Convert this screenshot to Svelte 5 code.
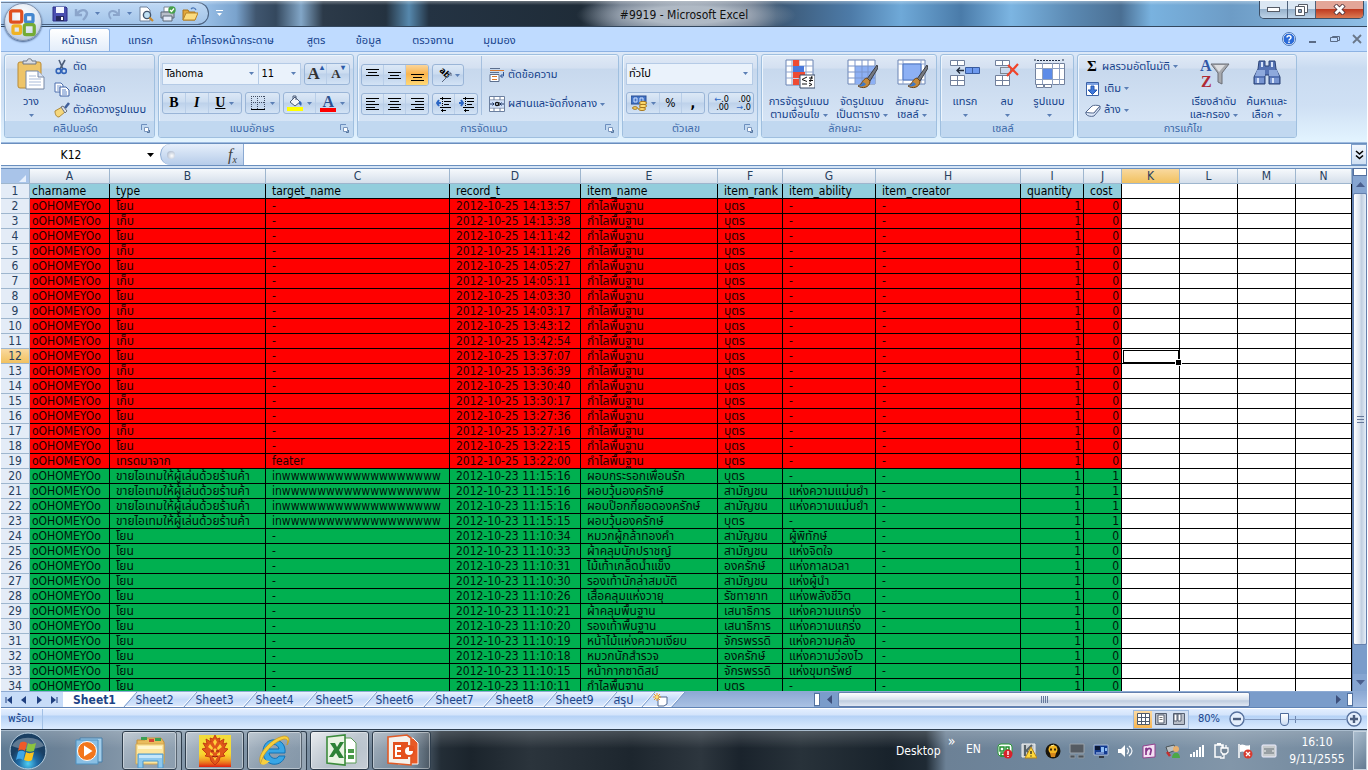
<script>
  const icons = {
    save: [16, 16, '<path d="M1 1h13l1 1v13H1z" fill="#4a4fb0" stroke="#2c2f86"/><path d="M4 1h8v6H4z" fill="#f4f6ff"/><path d="M4 10h8v5H4z" fill="#26295e"/><path d="M9 11h2v3H9z" fill="#fff"/>'],
    undo: [16, 16, '<path d="M2 3v6h6M3 8c3-5 9-5 10-1 0 3-2 5-4 7" fill="none" stroke="#8ba5cb" stroke-width="2.4"/>'],
    redo: [16, 16, '<path d="M13 3v6H7M12 8C9 4 4 4 3 8c0 3 1 4 2 5" fill="none" stroke="#8ba5cb" stroke-width="1.8"/>'],
    preview: [16, 16, '<path d="M2 1h7l3 3v11H2z" fill="#fff" stroke="#6f819b"/><circle cx="9" cy="9" r="3.6" fill="#bfe0f4" stroke="#42556e" stroke-width="1.4"/><path d="M11.500 11.500l3.500 3.500" stroke="#c98a2c" stroke-width="2.200"/>'],
    print: [16, 16, '<path d="M4 1h7v5H4z" fill="#fff" stroke="#7b8796"/><path d="M1 6h13v6H1z" fill="#b8bec9" stroke="#5b6676"/><path d="M3 10h9v5H3z" fill="#e4ebf8" stroke="#5b6676"/><circle cx="12" cy="4" r="3.700" fill="#46a04b"/><path d="M10 4l1.500 1.500L14 2.500" fill="none" stroke="#fff" stroke-width="1.200"/>'],
    open: [16, 16, '<path d="M1 4h5l1 2h6v8H1z" fill="#e2a73c" stroke="#a8741e"/><path d="M1 14l3-7h12l-3 7z" fill="#fbdc80" stroke="#b98528"/><path d="M9 3c2-2 4-1 5 1" fill="none" stroke="#4b76b6" stroke-width="1.300"/>'],
    cut: [16, 16, '<path d="M5 1l4 9M11 1L6 10" stroke="#4e5f7b" stroke-width="1.600"/><ellipse cx="4.500" cy="12" rx="2.300" ry="2.400" fill="none" stroke="#3163b8" stroke-width="1.600"/><ellipse cx="10" cy="12" rx="2.300" ry="2.400" fill="none" stroke="#3163b8" stroke-width="1.600"/>'],
    copy: [16, 16, '<path d="M1 2h6l2 2v7H1z" fill="#fff" stroke="#4d6fae"/><path d="M3 5h4M3 7h3M3 9h3" stroke="#7d9bd0"/><path d="M6 6h6l3 3v6H6z" fill="#fff" stroke="#3c60a4"/><path d="M8 9h4M8 11h5M8 13h5" stroke="#5b82c6"/>'],
    painter: [16, 16, '<path d="M1 9l7-4 3 5-6 5c-3 0-4-3-4-6z" fill="#f5d77c" stroke="#b08a38"/><path d="M7 5l4 6 2-2-4-5z" fill="#dfe3ea" stroke="#6d7480"/><path d="M11 6l4-5" stroke="#41609a" stroke-width="2.600"/>'],
    paste: [32, 32, '<rect x="3" y="4" width="23" height="26" rx="2" fill="#eec468" stroke="#b98a35"/><path d="M8 6V3h4c0-3 5-3 5 0h4v3z" fill="#d9dce2" stroke="#6f7786"/><path d="M11 13h12l6 6v12H11z" fill="#fff" stroke="#7788a5"/><path d="M23 13v6h6" fill="#dce5f4" stroke="#7788a5"/><path d="M14 18h7M14 21h12M14 24h12M14 27h12" stroke="#a9bbd9"/>'],
    borders: [16, 16, '<path d="M1 1.500h14M1 7.500h14M1.500 1v14M7.500 1v14M14.500 1v14" stroke="#3e4b62" stroke-dasharray="1 1"/><path d="M1 14.500h14" stroke="#000"/>'],
    fill: [16, 16, '<path d="M3 7l5-5 5 5-5 4z" fill="#f2f5fb" stroke="#4c5c78"/><path d="M6 4V1h3v4" fill="none" stroke="#4c5c78"/><path d="M12 6c3 0 3 3 2 5l-2-2z" fill="#3566b8"/><path d="M0 12h16v4H0z" fill="#ff0"/>'],
    wrap: [16, 16, '<path d="M1 1.500h10M1 5.500h9" stroke="#5c6f8e"/><path d="M1 3.500h14" stroke="#d9782e"/><path d="M1 7.500h9v7H1z" fill="#fff" stroke="#5c6f8e"/><path d="M3 9.500h5M3 12.500h5" stroke="#d9782e"/><path d="M14.500 5v4h-3m2-2l-2 2 2 2" fill="none" stroke="#2f5597"/>'],
    merge: [16, 16, '<path d="M.5.5h15v15H.5z" fill="#fff" stroke="#6b7f9f"/><path d="M0 4h16M0 12h16M5 0v4m6-4v4M5 12v4m6-4v4" stroke="#6b7f9f"/><path d="M1 4.500h14v7H1z" fill="#cfe0fa"/><path d="M1 8h4m6 0h4M3.500 6.500L5 8 3.500 9.500M12.500 6.500L11 8l1.500 1.500" fill="none" stroke="#203864"/><circle cx="8" cy="8" r="1.600" fill="none" stroke="#111" stroke-width="1.300"/><path d="M10 6v4" stroke="#111"/>'],
    money: [16, 16, '<rect x="0" y="1" width="15" height="8" fill="#4375c7" stroke="#2a4f94"/><path d="M3 3h3v4H3zM9 3h3v4H9z" fill="none" stroke="#cfe0ff"/><ellipse cx="12" cy="8" rx="3.500" ry="1.700" fill="#ffdc6e" stroke="#a4741b"/><ellipse cx="12" cy="11" rx="3.500" ry="1.700" fill="#ffdc6e" stroke="#a4741b"/><ellipse cx="11" cy="14" rx="3.500" ry="1.500" fill="#ffdc6e" stroke="#a4741b"/><ellipse cx="4" cy="13" rx="2.500" ry="1.300" fill="#ffdc6e" stroke="#a4741b"/>'],
    cond: [32, 32, '<path d="M3 2h27v25H3z" fill="#fff" stroke="#6b84b4"/><path d="M3 8h27M3 14h27M3 20h27M9 2v25M16 2v25M23 2v25" stroke="#8fa5cf"/><path d="M10 2h6v6h-6zM10 14h12v6H10zM10 21h6v6h-6z" fill="#ee4a33"/><path d="M10 8h11v6H10z" fill="#4a79dc"/><path d="M17 17h15v13H17z" fill="#fff" stroke="#394a66"/><path d="M24 19l-5 2.500 5 2M19 26h5M26 20h4M26 22.500h4M29 18l-2 6M26 25l3 1.500-3 1.500" fill="none" stroke="#111"/>'],
    tablefmt: [32, 32, '<path d="M2 2h27v24H2z" fill="#fff" stroke="#6b84b4"/><path d="M9 8h20v18H9z" fill="#8db0f4"/><path d="M2 8h27M2 14h27M2 20h27M9 2v24M16 2v24M22 2v24" stroke="#7b95cb"/><path d="M31 7L21 21l3 2L32 10z" fill="#76797f" stroke="#3b3d42"/><path d="M21 20c-5 1-4 6-9 8 4 3 12 2 12-5z" fill="#c58a3c" stroke="#6c4413"/><path d="M20 26c-1 2-4 3-8 2 3-1 4-2 5-4z" fill="#3d79c9"/>'],
    cellfmt: [32, 32, '<path d="M2 2h27v24H2z" fill="#fff" stroke="#6b84b4"/><path d="M2 6h27M2 22h27M7 2v24M25 2v24" stroke="#8fa5cf"/><path d="M7 6h18v16H7z" fill="#8db0f4" stroke="#4d74c0"/><path d="M31 7L21 21l3 2L32 10z" fill="#76797f" stroke="#3b3d42"/><path d="M21 20c-5 1-4 6-9 8 4 3 12 2 12-5z" fill="#c58a3c" stroke="#6c4413"/><path d="M20 26c-1 2-4 3-8 2 3-1 4-2 5-4z" fill="#3d79c9"/>'],
    insert: [32, 32, '<path d="M1.500 2.500h14v5h-14zM1.500 17.500h14v10h-14zM8.500 2.500v5M1.500 22.500h14M8.500 17.500v10" fill="#fff" stroke="#71809c"/><path d="M16.500 9.500h14v6h-14zM23.500 9.500v6" fill="#6d99ee" stroke="#385b9f"/><path d="M15 12.500H8m3-3l-3 3 3 3" fill="none" stroke="#222c3d" stroke-width="1.300"/>'],
    del: [32, 32, '<path d="M4.500 2.500h14v5h-14zM4.500 17.500h14v10h-14zM11.500 2.500v5M4.500 22.500h14M11.500 17.500v10" fill="#fff" stroke="#71809c"/><path d="M9.500 9.500h10v6h-10z" fill="none" stroke="#333" stroke-dasharray="1 1"/><path d="M17 7l10 10M27 6L16 18" stroke="#f0442a" stroke-width="2.200"/>'],
    format: [32, 32, '<path d="M2 1v3M30 1v3M4 2.500h24" stroke="#1f2d45" stroke-dasharray="2 1"/><path d="M2.500 5.500h29v21h-29z" fill="#fff" stroke="#71809c"/><path d="M2 10.500h29M2 21.500h29M9.500 5v22M19.500 5v22M26.500 5v22" stroke="#8d9fbf"/><path d="M10 11h9v10h-9z" fill="#5c8be8"/><path d="M3.500 26.500h7v3h-7zM11.500 26.500h7v3h-7z" fill="#fff" stroke="#71809c"/>'],
    down: [16, 16, '<path d="M1.500 1.500h12v13h-12z" fill="#fff" stroke="#3c62a6"/><path d="M2 2h11v2H2z" fill="#7ea3e3"/><path d="M6 5h3v4h3l-4.500 4.500L3 9h3z" fill="#3f78dc" stroke="#2456ad"/>'],
    eraser: [16, 16, '<path d="M1 10L7 4c1-1 6-1 8 0L9 11c-1 2-8 2-8-1z" fill="#fff" stroke="#54698f"/><path d="M1 10c2 1 6 1 8 1l6-7v3l-6 7c-3 1-7 0-8-2z" fill="#dbe6f7" stroke="#54698f"/>'],
    sort: [32, 32, '<path d="M13 6h18l-7 9v11l-4-2v-9z" fill="#a7a9ae" stroke="#6b6e76"/><path d="M16 7h11l-6 7z" fill="#dcdde0"/>'],
    find: [32, 32, '<path d="M8 3h6v5h4V3h6l1 8 4 8v7H18v-9h-4v9H3v-7l4-8z" fill="#5573b4" stroke="#2b4377"/><path d="M6 12h8v6H4zM18 12h8l2 6H18z" fill="#8ea9dc"/><path d="M4 20h9v5H4zM19 20h9v5h-9z" fill="#7895d1"/><path d="M6 20h2v5H6zM21 20h2v5h-2zM10 4h2v5h-2zM20 4h2v5h-2z" fill="#d5e2f9"/>'],
    help: [14, 14, '<circle cx="7" cy="7" r="6" fill="#2b6bd8" stroke="#fff"/><circle cx="7" cy="7" r="6.500" fill="none" stroke="#4b77b8"/><path d="M5 5.500c0-2.500 4-2.500 4 0 0 1.500-2 1.500-2 3M7 9.500V11" fill="none" stroke="#fff" stroke-width="1.500"/>'],
    launcher: [9, 9, '<path d="M.5 6V.5H6" fill="none" stroke="#6d8fbe"/><path d="M3.500 3.500h4v4h-4z" fill="#fff" stroke="#7a96bd"/><path d="M6 8.500h2.500V6" fill="none" stroke="#55769f"/>'],
    media: [30, 30, '<path d="M6 2h22v24H6z" fill="#a3cde9" stroke="#477fa9"/><path d="M2 4h22v24H2z" fill="#89bfe4" stroke="#4d8fbe"/><circle cx="13" cy="15" r="9.500" fill="#f2761c" stroke="#fff"/><path d="M10 9.500v11l8.500-5.500z" fill="#fff"/>'],
    folder: [34, 34, '<path d="M4 6h8l2-2h14l3 4v20H4z" fill="#e9bb5d" stroke="#c4903b"/><path d="M8 3h6v3H8zM22 4h6v3h-6z" fill="#3c9f53"/><path d="M16 5h5v3h-5z" fill="#d44537"/><path d="M3 10h28v20H3z" fill="#fbe6a0" stroke="#d5a64e"/><path d="M5 12h24v3H5z" fill="#fff5cf"/><path d="M5 34V20h25v14h-5v-7H10v7z" fill="#8cc8ee" stroke="#4c97c9"/><path d="M6 21h23v3H6z" fill="#c4e6fa"/>'],
    garuda: [34, 34, '<defs><radialGradient id="gr" cy=".55"><stop offset="0" stop-color="#ffc31a"/><stop offset=".6" stop-color="#ffd22a"/><stop offset="1" stop-color="#f3dc3a"/></radialGradient><linearGradient id="gl" x2="0" y2="1"><stop offset="0" stop-color="#f9a51b" stop-opacity="0"/><stop offset="1" stop-color="#dd1c12"/></linearGradient></defs><rect x="1" y="1" width="32" height="32" fill="url(#gr)"/><rect x="1" y="19" width="32" height="14" fill="url(#gl)"/><path d="M17 1l2 4 3-1-1 4 5-3-1 5 4-1-3 5 4 1-5 5 2 2-5 1-1 4-4 4-4-4-1-4-5-1 2-2-5-5 4-1-3-5 4 1-1-5 5 3-1-4 3 1z" fill="#e0571a" stroke="#b92c10" stroke-width=".8"/><path d="M17 5l2 3-2 4-2-4zM12 10l3 4-1 2-4-3zM22 10l-3 4 1 2 4-3zM17 14l2 2-2 3-2-3zM12 18l3 2v2l-3-1zM22 18l-3 2v2l3-1zM15 23h4l-2 4z" fill="#ffcf3b"/><path d="M13 17h3M18 17h3M14 22l3 1 3-1" fill="none" stroke="#8f1d0b"/>'],
    ie: [36, 36, '<path d="M28 20H12c1 6 8 7 10 3h6c-2 7-8 9-13 8C3 28 3 9 15 7c8-1 14 4 13 13zM12 16h10c-1-6-9-6-10 0z" fill="#38a6e6" stroke="#1272b4"/><path d="M4 31c-6-8 10-26 23-28 7 0 5 6 3 9 1-4 1-6-3-6C18 8 5 20 4 31z" fill="#f8cf3e" stroke="#c99517" stroke-width=".7"/><path d="M4 31c3 2 7-1 9-3-3 0-5-1-7-3-1 3-2 4-2 6z" fill="#f8cf3e"/>'],
    excel: [34, 34, '<path d="M14 4h14l5 5v20H14z" fill="#fff" stroke="#5a9c55"/><path d="M17 15h6v4h-6zM25 15h6v4h-6zM17 21h6v4h-6zM25 21h6v4h-6z" fill="#4a9a49"/><path d="M4 3l18-2v30L4 29z" fill="#e9f4e3" stroke="#3c8c3c" stroke-width="1.600"/><path d="M7 9h5l2 4 3-5h4l-5 8 5 8h-5l-3-5-3 4H6l5-8z" fill="#2d8237"/>'],
    ppt: [34, 34, '<path d="M13 4h15l5 5v21H13z" fill="#e95a26" stroke="#fff"/><path d="M3 3l19-2 4 3v27L3 29z" fill="#f5f1ec" stroke="#e05a26" stroke-width="1.600"/><path d="M8 8h15v17H8z" fill="#e4511e"/><path d="M10 11h6v2h-4v3h4v2h-4v3h4v2h-6z" fill="#fff"/><circle cx="24" cy="17" r="6" fill="#e4511e"/><circle cx="24" cy="17" r="4" fill="#fff"/><path d="M24 17v-5h5v5z" fill="#e4511e"/>'],
    t1: [16, 16, '<rect x="1" y="1" width="14" height="12" rx="3" fill="#fff" stroke="#2b9b38"/><path d="M3 4h4v4H3zM9 4h3v3H9zM4 10h4v3H4z" fill="none" stroke="#22902f" stroke-width="1.500"/><circle cx="11" cy="11" r="4.500" fill="#d8202a"/><path d="M11 8v4M11 13v1" stroke="#fff" stroke-width="1.400"/>'],
    t2: [16, 16, '<path d="M1 1h13v13H1z" fill="#c5cbcf" stroke="#eee"/><path d="M4 2v11M5 8l6-6M5 7l6 6" stroke="#576268" stroke-width="2"/><path d="M10 4l6 11H4z" fill="#ffd83a" stroke="#b3851c"/><path d="M10 8v3M10 12.500v1" stroke="#222" stroke-width="1.300"/>'],
    t3: [16, 16, '<circle cx="8" cy="8" r="7.500" fill="#19150c"/><circle cx="8" cy="6.500" r="4.500" fill="#f3b622"/><path d="M5 10h6l-1 4H6z" fill="#d6871a"/><path d="M5 5.500h2v2H5zM9 5.500h2v2H9z" fill="#402a04"/><path d="M6 3l3-1" stroke="#fff2a0"/>'],
    t4: [16, 16, '<path d="M1 1h14v9H1z" fill="#555b62" stroke="#9ba3aa"/><path d="M1 12h5v3H1zM9 12h6v3H9z" fill="#4b5259" stroke="#8b949c"/>'],
    t5: [16, 16, '<path d="M1 2h14v10H1z" fill="#123b91" stroke="#a9b9d3"/><path d="M2 3h5v4H2z" fill="#0a1836"/><path d="M8 4h3v5H8zM12 5h2v3h-2z" fill="#8ebcf2"/><path d="M3 10h8" fill="none" stroke="#cce0ff"/><path d="M6 13h5v2H6z" fill="#353a44"/>'],
    t6: [16, 16, '<path d="M1 6h3l4-4v12l-4-4H1z" fill="#fff"/><path d="M10 5c2 2 2 4 0 6M12 3c4 3 4 7 0 10" fill="none" stroke="#f3f6fa" stroke-width="1.200"/>'],
    t7: [16, 16, '<path d="M2 3l12-2v13l-12 1z" fill="#f3dff3" stroke="#93418f"/><path d="M5 12V5l1 2c2-3 5-1 4 1l-1 4" fill="none" stroke="#86358a" stroke-width="1.700"/>'],
    t8: [16, 16, '<path d="M1 4l8-2 2 5-8 3z" fill="#bac0c3" stroke="#4c5356"/><circle cx="11" cy="6" r="3" fill="#e9b06e"/><path d="M7 15c0-7 8-7 8 0z" fill="#4ba846"/><path d="M2 9l3 4" stroke="#c52e2e" stroke-width="2.500"/>'],
    t9: [16, 16, '<path d="M1 11h2v3H1zM4 9h2v5H4zM7 7h2v7H7zM10 4h2v10h-2zM13 2h2v12h-2z" fill="#fff"/>'],
    t10: [16, 16, '<path d="M2 2h8v12H2z" fill="none" stroke="#fff" stroke-width="1.500"/><path d="M4 0h4v2H4z" fill="#fff"/><path d="M8 5h7v4l-2 2h-3l-2-2zM9 2v3M13 2v3M11 11v4H7" fill="#738596" stroke="#fff" stroke-width="1.300"/>'],
    t11: [16, 16, '<path d="M2 1v14" stroke="#fff" stroke-width="1.500"/><path d="M3 2c4-2 5 2 10 0v7c-5 2-6-2-10 0z" fill="#fff"/><circle cx="11" cy="11" r="4.500" fill="#d83a2f"/><path d="M9 9l4 4M13 9l-4 4" stroke="#fff" stroke-width="1.300"/>'],
    t12: [16, 16, '<rect x="1" y="2" width="14" height="12" rx="1" fill="#c7cbcd" stroke="#eef"/><path d="M3 6h10M3 10h10M5 8h6" stroke="#697278"/>'],
    newsheet: [16, 14, '<path d="M5 4h9v7l-3 2H5z" fill="#fff" stroke="#50688f"/><path d="M4 0v8M0 4h8M1 1l6 6M7 1L1 7" stroke="#f0951e"/><circle cx="4" cy="4" r="1.500" fill="#ffe26a"/>'],
  };

  const ribbonTabs = [
    ['หน้าแรก', 61], ['แทรก', 61], ['เค้าโครงหน้ากระดาษ', 119], ['สูตร', 52],
    ['ข้อมูล', 53], ['ตรวจทาน', 76], ['มุมมอง', 57],
  ];
  const letters = 'ABCDEFGHIJKLMN'.split('');
  const widths = [80, 156, 184, 131, 137, 65, 93, 145, 63, 38, 58, 58, 58, 0];
  const fields = ['charname', 'type', 'target_name', 'record_t', 'item_name', 'item_rank', 'item_ability', 'item_creator', 'quantity', 'cost'];

  const redTimes = ['14:13:57', '14:13:38', '14:11:42', '14:11:26', '14:05:27', '14:05:11', '14:03:30', '14:03:17', '13:43:12', '13:42:54', '13:37:07', '13:36:39', '13:30:40', '13:30:17', '13:27:36', '13:27:16', '13:22:15', '13:22:00'];
  const sold = 'ขายไอเทมให้ผู้เล่นด้วยร้านค้า';
  const buyer = 'inwwwwwwwwwwwwwwwwww';
  const green = [
    [sold, buyer, '11:15:16', 'ผอบกระรอกเพื่อนรัก', 'บุตร', '-', 1],
    [sold, buyer, '11:15:16', 'ผอบวุ้นองครักษ์', 'สามัญชน', 'แห่งความแม่นยำ', 1],
    [sold, buyer, '11:15:16', 'ผอบป๊อกกี้ยอดองครักษ์', 'สามัญชน', 'แห่งความแม่นยำ', 1],
    [sold, buyer, '11:15:15', 'ผอบวุ้นองครักษ์', 'บุตร', '-', 1],
    ['โยน', '-', '11:10:34', 'หมวกผู้กล้าทองคำ', 'สามัญชน', 'ผู้พิทักษ์', 0],
    ['โยน', '-', '11:10:33', 'ผ้าคลุมนักปราชญ์', 'สามัญชน', 'แห่งจิตใจ', 0],
    ['โยน', '-', '11:10:31', 'ไม้เท้าเกล็ดน้ำแข็ง', 'องครักษ์', 'แห่งกาลเวลา', 0],
    ['โยน', '-', '11:10:30', 'รองเท้านักล่าสมบัติ', 'สามัญชน', 'แห่งผู้นำ', 0],
    ['โยน', '-', '11:10:26', 'เสื้อคลุมแห่งวายุ', 'รัชทายาท', 'แห่งพลังชีวิต', 0],
    ['โยน', '-', '11:10:21', 'ผ้าคลุมพื้นฐาน', 'เสนาธิการ', 'แห่งความแกร่ง', 0],
    ['โยน', '-', '11:10:20', 'รองเท้าพื้นฐาน', 'เสนาธิการ', 'แห่งความแกร่ง', 0],
    ['โยน', '-', '11:10:19', 'หน้าไม้แห่งความเงียบ', 'จักรพรรดิ', 'แห่งความคลั่ง', 0],
    ['โยน', '-', '11:10:18', 'หมวกนักสำรวจ', 'องครักษ์', 'แห่งความว่องไว', 0],
    ['โยน', '-', '11:10:15', 'หน้ากากซาดิสม์', 'จักรพรรดิ', 'แห่งขุมทรัพย์', 0],
    ['โยน', '-', '11:10:11', 'กำไลพื้นฐาน', 'บุตร', '-', 0],
  ];
  const rows = [
    { kind: 'head', cells: fields },
    ...redTimes.map((t, i) => ({
      kind: 'red',
      cells: ['oOHOMEYOo', i === 17 ? 'เทรดมาจาก' : i % 2 ? 'เก็บ' : 'โยน', i === 17 ? 'feater' : '-', '2012-10-25 ' + t, 'กำไลพื้นฐาน', 'บุตร', '-', '-', 1, 0],
    })),
    ...green.map((g) => ({
      kind: 'green',
      cells: ['oOHOMEYOo', g[0], g[1], '2012-10-23 ' + g[2], g[3], g[4], g[5], '-', 1, g[6]],
    })),
  ];
  const sheets = ['Sheet1', 'Sheet2', 'Sheet3', 'Sheet4', 'Sheet5', 'Sheet6', 'Sheet7', 'Sheet8', 'Sheet9', 'สรุป'];
  const tray = ['t1', 't2', 't3', 't4', 't5', 't6', 't7', 't8', 't9', 't10', 't11', 't12'];
</script>

{#snippet icon(name)}
  <svg class="icon" width={icons[name][0]} height={icons[name][1]} viewBox="0 0 {icons[name][0]} {icons[name][1]}" aria-hidden="true">{@html icons[name][2]}</svg>
{/snippet}

{#snippet arrow()}
  <svg class="arrow" width="5" height="3" viewBox="0 0 5 3" aria-hidden="true"><path d="M0 0h5L2.500 3z" fill="currentColor" /></svg>
{/snippet}

{#snippet lines(kind)}
  <svg class="lines" width="15" height="16" viewBox="0 0 15 16" aria-hidden="true">
    {#if kind === 'top'}<path d="M1 2.500h13M3 5.500h9M1 8.500h13" />
    {:else if kind === 'mid'}<path d="M1 5.500h13M3 8.500h9M1 11.500h13" />
    {:else if kind === 'bottom'}<path d="M1 7.500h13M3 10.500h9M1 13.500h13" />
    {:else if kind === 'left'}<path d="M1 2.500h13M1 5.500h9M1 8.500h13M1 11.500h9M1 13.500h13" />
    {:else if kind === 'center'}<path d="M1 2.500h13M3 5.500h9M1 8.500h13M3 11.500h9M1 13.500h13" />
    {:else if kind === 'right'}<path d="M1 2.500h13M5 5.500h9M1 8.500h13M5 11.500h9M1 13.500h13" />
    {:else}<path d="M4 2.500h11M8 5.500h7M8 8.500h5M4 11.500h11M5 14.500h5" /><path class="dots" d="M6.500 1v15" />
      <path class="blue" d={kind === 'outdent' ? 'M5 7H1m2-3L1 7l2 3' : 'M0 7h4M2 4l2 3-2 3'} />{/if}
  </svg>
{/snippet}

{#snippet caption(text, launch = true)}
  <div class="caption"><span>{text}</span>{#if launch}<button aria-label="เปิดกล่องโต้ตอบ {text}">{@render icon('launcher')}</button>{/if}</div>
{/snippet}

{#snippet big(name, a, b, w)}
  <button class="big" style:width="{w}px">
    {@render icon(name)}
    <span>{a}</span>
    {#if b}<span>{b} {@render arrow()}</span>{:else}<span>{@render arrow()}</span>{/if}
  </button>
{/snippet}

<div class="screen">
  <header class="title">
    <div class="quick">
      <button aria-label="บันทึก">{@render icon('save')}</button>
      <button aria-label="เลิกทำ" class="split">{@render icon('undo')}{@render arrow()}</button>
      <button aria-label="ทำซ้ำ" class="split">{@render icon('redo')}{@render arrow()}</button>
      <button aria-label="ตัวอย่างก่อนพิมพ์">{@render icon('preview')}</button>
      <button aria-label="พิมพ์">{@render icon('print')}</button>
      <button aria-label="เปิด">{@render icon('open')}</button>
    </div>
    <button class="customize" aria-label="กำหนดแถบเครื่องมือด่วน"><svg width="7" height="7" viewBox="0 0 7 7"><path d="M0 .5h7" stroke="#fff" /><path d="M1 3h5L3.500 6z" fill="#fff" /></svg></button>
    <h1>#9919 - Microsoft Excel</h1>
    <div class="winbtns">
      <button aria-label="ย่อ"><svg width="13" height="6" viewBox="0 0 13 6"><rect x=".5" y=".5" width="12" height="4" fill="#fff" stroke="#555b66" /></svg></button>
      <button aria-label="คืนค่า"><svg width="13" height="12" viewBox="0 0 13 12"><path d="M3.500.5h9v8h-9z" fill="#fff" stroke="#555b66" /><path d="M.5 2.500h9v9h-9z" fill="#fff" stroke="#555b66" /><path d="M3.500 5.500h3v3h-3z" fill="#8ba6c4" stroke="#555b66" /></svg></button>
      <button class="close" aria-label="ปิด"><svg width="13" height="11" viewBox="0 0 13 11"><path d="M2 1l9 9M11 1l-9 9" stroke="#50333a" stroke-width="4.500" /><path d="M2.500 1.500l8 8M10.500 1.500l-8 8" stroke="#fff" stroke-width="2.800" /></svg></button>
    </div>
  </header>
  <button class="office" aria-label="ปุ่ม Office">
    <svg width="30" height="30" viewBox="1 1 24 24"><g fill="none" stroke-width="2.600"><rect x="3" y="4" width="9" height="9" rx="1.500" stroke="#e0501f" /><rect x="15" y="7" width="6" height="6" rx="1" stroke="#4487cf" /><rect x="5" y="16" width="6" height="6" rx="1" stroke="#f0b323" /><rect x="14" y="15" width="8" height="8" rx="1.500" stroke="#74ab35" /></g></svg>
  </button>

  <nav class="tabs">
    {#each ribbonTabs as [name, w], i}
      <button class:active={i === 0} style:width="{w}px">{name}</button>
    {/each}
    <div class="docbtns">
      <button aria-label="วิธีใช้">{@render icon('help')}</button>
      <button aria-label="ย่อเอกสาร"><svg width="10" height="10" viewBox="0 0 10 10"><path d="M1 8h7" stroke="#5a6b85" stroke-width="2" /></svg></button>
      <button aria-label="คืนค่าเอกสาร"><svg width="10" height="10" viewBox="0 0 10 10"><path d="M2.500 2.500h7v4h-7z" fill="none" stroke="#5a6b85" /><path d="M.5 3.500h7v4h-7z" fill="#c0dbff" stroke="#5a6b85" /></svg></button>
      <button aria-label="ปิดเอกสาร"><svg width="10" height="10" viewBox="0 0 10 10"><path d="M1 1l8 8M9 1L1 9" stroke="#6a7789" stroke-width="1.800" /></svg></button>
    </div>
  </nav>

  <div class="ribbon">
    <section class="group" style:width="151px">
      <div class="body">
        {@render big('paste', 'วาง', '', 46)}
        <div class="stack">
          <button class="small">{@render icon('cut')}ตัด</button>
          <button class="small">{@render icon('copy')}คัดลอก</button>
          <button class="small">{@render icon('painter')}ตัวคัดวางรูปแบบ</button>
        </div>
      </div>
      {@render caption('คลิปบอร์ด')}
    </section>

    <section class="group" style:width="196px">
      <div class="body rows">
        <div class="row">
          <label class="combo wide"><select aria-label="แบบอักษร"><option>Tahoma</option></select>{@render arrow()}</label>
          <label class="combo num"><select aria-label="ขนาดแบบอักษร"><option>11</option></select>{@render arrow()}</label>
          <div class="set shift"><button class="serif grow" aria-label="เพิ่มขนาดแบบอักษร">A<sup>▴</sup></button><button class="serif shrink" aria-label="ลดขนาดแบบอักษร">A<sup>▾</sup></button></div>
        </div>
        <div class="row">
          <div class="set"><button class="serif wider"><b>B</b></button><button class="serif wider"><i>I</i></button><button class="serif split-lg"><u>U</u>{@render arrow()}</button></div>
          <div class="set shift"><button class="split-lg" aria-label="เส้นขอบ">{@render icon('borders')}{@render arrow()}</button></div>
          <div class="set shift"><button class="split-lg" aria-label="สีเติม">{@render icon('fill')}{@render arrow()}</button><button class="split-lg serif" aria-label="สีแบบอักษร"><span class="fontcolor">A</span>{@render arrow()}</button></div>
        </div>
      </div>
      {@render caption('แบบอักษร')}
    </section>

    <section class="group" style:width="262px">
      <div class="body">
        <div class="rows align">
          <div class="row">
            <div class="set"><button aria-label="ชิดบน">{@render lines('top')}</button><button aria-label="กึ่งกลางแนวตั้ง">{@render lines('mid')}</button><button aria-label="ชิดล่าง" class="on">{@render lines('bottom')}</button></div>
            <div class="set shift"><button class="turn" aria-label="การวางแนว"><svg width="17" height="17" viewBox="0 0 17 17"><text x="1" y="6" transform="rotate(45 4 6)" font-size="9" font-weight="bold">ab</text><path d="M5 15L14 6m-3 0h3v3" fill="none" stroke="#58657c" /></svg>{@render arrow()}</button></div>
          </div>
          <div class="row">
            <div class="set"><button aria-label="ชิดซ้าย">{@render lines('left')}</button><button aria-label="กึ่งกลาง">{@render lines('center')}</button><button aria-label="ชิดขวา">{@render lines('right')}</button></div>
            <div class="set shift"><button aria-label="ลดการเยื้อง">{@render lines('outdent')}</button><button aria-label="เพิ่มการเยื้อง">{@render lines('indent')}</button></div>
          </div>
        </div>
        <div class="rows wraps">
          <button class="small">{@render icon('wrap')}ตัดข้อความ</button>
          <button class="small">{@render icon('merge')}ผสานและจัดกึ่งกลาง {@render arrow()}</button>
        </div>
      </div>
      {@render caption('การจัดแนว')}
    </section>

    <section class="group" style:width="136px">
      <div class="body rows">
        <div class="row"><label class="combo full"><select aria-label="รูปแบบตัวเลข"><option>ทั่วไป</option></select>{@render arrow()}</label></div>
        <div class="row">
          <div class="set"><button class="split-lg" aria-label="รูปแบบสกุลเงิน">{@render icon('money')}{@render arrow()}</button><button class="pct">%</button><button class="comma">,</button></div>
          <div class="set shift"><button class="dec" aria-label="เพิ่มตำแหน่งทศนิยม"><span><i>←</i>.0</span><span>.00</span></button><button class="dec" aria-label="ลดตำแหน่งทศนิยม"><span>.00</span><span><i>→</i>.0</span></button></div>
        </div>
      </div>
      {@render caption('ตัวเลข')}
    </section>

    <section class="group" style:width="176px">
      <div class="body">
        {@render big('cond', 'การจัดรูปแบบ', 'ตามเงื่อนไข', 68)}
        {@render big('tablefmt', 'จัดรูปแบบ', 'เป็นตาราง', 58)}
        {@render big('cellfmt', 'ลักษณะ', 'เซลล์', 42)}
      </div>
      {@render caption('ลักษณะ', false)}
    </section>

    <section class="group" style:width="134px">
      <div class="body">
        {@render big('insert', 'แทรก', '', 42)}
        {@render big('del', 'ลบ', '', 42)}
        {@render big('format', 'รูปแบบ', '', 42)}
      </div>
      {@render caption('เซลล์', false)}
    </section>

    <section class="group" style:width="220px">
      <div class="body">
        <div class="stack editing">
          <button class="small"><b class="sigma">Σ</b>ผลรวมอัตโนมัติ {@render arrow()}</button>
          <button class="small">{@render icon('down')}เติม {@render arrow()}</button>
          <button class="small">{@render icon('eraser')}ล้าง {@render arrow()}</button>
        </div>
        <button class="big" style:width="54px">
          <svg class="icon" width="32" height="32" viewBox="0 0 32 32">{@html icons.sort[2]}<g font-family="Liberation Serif, serif" font-weight="bold" font-size="16"><text x="2" y="13" fill="#3158a6">A</text><text x="3" y="29" fill="#b02a35">Z</text></g></svg>
          <span>เรียงลำดับ</span><span>และกรอง {@render arrow()}</span>
        </button>
        {@render big('find', 'ค้นหาและ', 'เลือก', 54)}
      </div>
      {@render caption('การแก้ไข', false)}
    </section>
  </div>

  <div class="formula">
    <label class="namebox"><input value="K12" aria-label="กล่องชื่อ" /><svg width="7" height="4" viewBox="0 0 7 4"><path d="M0 0h7L3.500 4z" /></svg></label>
    <div class="fxpart"><span class="knob"></span><button class="fx" aria-label="แทรกฟังก์ชัน">f<sub>x</sub></button></div>
    <input class="fxinput" aria-label="แถบสูตร" />
    <button class="expand" aria-label="ขยายแถบสูตร"><svg width="9" height="10" viewBox="0 0 9 10"><path d="M1 1l3.500 3L8 1M1 5.500l3.500 3 3.500-3" fill="none" stroke="#000" stroke-width="1.600" /></svg></button>
  </div>

  <main class="work">
    <div class="grid">
      <table>
        <colgroup><col style:width="29px" />{#each widths as w}<col style:width={w ? `${w}px` : 'auto'} />{/each}</colgroup>
        <thead><tr><th class="corner" aria-label="เลือกทั้งหมด"><svg width="7" height="7" viewBox="0 0 7 7"><path d="M7 0v7H0z" fill="#e6effc" /></svg></th>{#each letters as l}<th class:sel={l === 'K'}>{l}</th>{/each}</tr></thead>
        <tbody>
          {#each rows as row, r}
            <tr class={row.kind}>
              <th class:sel={r === 11}>{r + 1}</th>
              {#each letters as l, c}
                <td class:data={c < 10} class:first={c === 0} class:right={c > 7 && c < 10 && r > 0} class:cursor={r === 11 && l === 'K'}>{row.cells[c] ?? ''}</td>
              {/each}
            </tr>
          {/each}
        </tbody>
      </table>
    </div>
    <div class="vscroll">
      <span class="splitter"></span>
      <button aria-label="เลื่อนขึ้น"><svg width="9" height="5" viewBox="0 0 9 5"><path d="M0 5h9L4.500 0z" fill="#4a5f8e" /></svg></button>
      <div class="vtrack"><div class="vthumb"></div></div>
      <button aria-label="เลื่อนลง"><svg width="9" height="5" viewBox="0 0 9 5"><path d="M0 0h9L4.500 5z" fill="#4a5f8e" /></svg></button>
    </div>
  </main>

  <div class="sheetbar">
    <div class="nav">
      <button aria-label="แผ่นแรก"><svg width="8" height="8" viewBox="0 0 8 8"><path d="M1 1v6" stroke="#1f3f7f" /><path d="M7 0v8L2 4z" /></svg></button>
      <button aria-label="แผ่นก่อน"><svg width="8" height="8" viewBox="0 0 8 8"><path d="M6 0v8L1 4z" /></svg></button>
      <button aria-label="แผ่นถัดไป"><svg width="8" height="8" viewBox="0 0 8 8"><path d="M2 0v8l5-4z" /></svg></button>
      <button aria-label="แผ่นสุดท้าย"><svg width="8" height="8" viewBox="0 0 8 8"><path d="M7 1v6" stroke="#1f3f7f" /><path d="M1 0v8l5-4z" /></svg></button>
    </div>
    {#each [...sheets, ''] as s, i}
      {@const w = s === '' ? 30 : i === 9 ? 38 : 60}
      <button class="sheet" class:current={i === 0} style:width="{w}px" style:z-index={20 - i} aria-label={s || 'แทรกแผ่นงาน'}>
        <svg class="shape" width={w + 14} height="15" viewBox="0 0 {w + 14} 15"><defs><linearGradient id="tab" x2="0" y2="1"><stop offset="0" stop-color="#e9f2ff" /><stop offset=".5" stop-color="#c3daf9" /><stop offset="1" stop-color="#dce9fc" /></linearGradient></defs><path d="M0 15L{i ? 13 : 0} 0H{w + 13}L{w} 15z" fill={i ? 'url(#tab)' : '#fff'} /><path d="M{w + 13} 0L{w} 14.500H0" fill="none" stroke="#fff" /><path d="M{w + 14} 0L{w + 1} 15" stroke="#7c9ccb" /></svg>
        {#if s}<span>{s}</span>{:else}<span class="add">{@render icon('newsheet')}</span>{/if}
      </button>
    {/each}
    <div class="hscroll">
      <span class="vsplit"></span>
      <button aria-label="เลื่อนซ้าย"><svg width="5" height="9" viewBox="0 0 5 9"><path d="M5 0v9L0 4.500z" fill="#3d4f7a" /></svg></button>
      <div class="htrack"><div class="hthumb"></div></div>
      <button aria-label="เลื่อนขวา"><svg width="5" height="9" viewBox="0 0 5 9"><path d="M0 0v9l5-4.500z" fill="#3d4f7a" /></svg></button>
      <span class="vsplit"></span>
    </div>
  </div>

  <footer class="status">
    <span class="ready">พร้อม</span>
    <div class="views">
      <button class="on" aria-label="ปกติ"><svg width="13" height="12" viewBox="0 0 13 12"><path d="M.5.5h12v11H.5zM.5 4.500h12M.5 8.500h12M4.500.5v11M8.500.5v11" fill="#fff" stroke="#4e5a6c" /></svg></button>
      <button aria-label="เค้าโครงหน้ากระดาษ"><svg width="12" height="12" viewBox="0 0 12 12"><path d="M.5.5h11v11H.5z" fill="#b8bec8" stroke="#555f70" /><path d="M3 2h6v8H3z" fill="#fff" stroke="#555f70" /><path d="M4.500 4.500h3M4.500 6.500h3" stroke="#777" /></svg></button>
      <button aria-label="แสดงตัวอย่างตัวแบ่งหน้า"><svg width="12" height="12" viewBox="0 0 12 12"><path d="M.5.5h11v11H.5z" fill="#b8bec8" stroke="#555f70" /><path d="M1 1h3v7H1zM5 1h3v7H5z" fill="#fff" stroke="#555f70" /></svg></button>
    </div>
    <button class="zoom">80%</button>
    <button class="round" aria-label="ย่อเล็กลง"><svg width="16" height="16" viewBox="0 0 16 16"><circle cx="8" cy="8" r="7" fill="#e4eefc" stroke="#56709d" stroke-width="1.400" /><path d="M4 8h8" stroke="#4b5d7d" stroke-width="2.400" /></svg></button>
    <input class="slider" type="range" min="0" max="100" value="38" aria-label="ย่อ/ขยาย" />
    <button class="round" aria-label="ขยายใหญ่ขึ้น"><svg width="16" height="16" viewBox="0 0 16 16"><circle cx="8" cy="8" r="7" fill="#e4eefc" stroke="#56709d" stroke-width="1.400" /><path d="M4 8h8M8 4v8" stroke="#4b5d7d" stroke-width="2.400" /></svg></button>
  </footer>

  <div class="taskbar">
    <button class="start" aria-label="เริ่ม"><svg width="40" height="38" viewBox="0 0 40 38"><defs><radialGradient id="orb" cx=".5" cy=".85"><stop offset="0" stop-color="#4fd0f4" /><stop offset=".5" stop-color="#1f6ca8" /><stop offset="1" stop-color="#193f63" /></radialGradient></defs><circle cx="20" cy="19" r="18" fill="url(#orb)" stroke="#b8cfe0" /><path d="M4 14C8 3 32 3 36 14c-8 4-24 4-32 0z" fill="#fff" opacity=".3" /><path d="M12 11c3-2 5-1 7 0l-2 8c-2-1-4-2-7 0z" fill="#ef5a28" /><path d="M20 11c3 2 5 1 8 0l-2 8c-3 1-5 1-8 0z" fill="#8bc43f" /><path d="M10 20c3-2 5-1 7 0l-2 8c-3-2-5-1-7 0z" fill="#3fa6e8" /><path d="M18 20c3 2 5 1 8 0l-2 8c-3 2-5 1-8 0z" fill="#fbc31f" /></svg></button>
    <button class="pinned" aria-label="Windows Media Player">{@render icon('media')}</button>
    <button class="task many" aria-label="Windows Explorer">{@render icon('folder')}</button>
    <button class="task" aria-label="เกม">{@render icon('garuda')}</button>
    <button class="task many" aria-label="Internet Explorer">{@render icon('ie')}</button>
    <button class="task live" aria-label="Microsoft Excel">{@render icon('excel')}</button>
    <button class="task" aria-label="Microsoft PowerPoint">{@render icon('ppt')}</button>
    <div class="tray">
      <span class="desk">Desktop</span><button class="more" aria-label="แสดงเพิ่มเติม">»</button><span class="lang">EN</span>
      {#each tray as t}<button class="ti" aria-label="ไอคอนถาด {t.slice(1)}">{@render icon(t)}</button>{/each}
      <div class="clock"><span>16:10</span><span>9/11/2555</span></div>
      <button class="peek" aria-label="แสดงเดสก์ท็อป"></button>
    </div>
  </div>
</div>

<style>
  :global(body) { margin: 0; background: #fff; }
  .screen { position: relative; box-sizing: border-box; height: 100vh; min-height: 400px; padding: 1px 1px 0; display: flex; flex-direction: column; overflow: hidden; font: 11px/14px "DejaVu Sans Condensed", "Noto Sans Thai", "Noto Sans", sans-serif; color: #15428b; }
  .screen * { box-sizing: border-box; }
  button, select, input { font: inherit; color: inherit; margin: 0; }
  button { border: 0; padding: 0; background: none; display: flex; align-items: center; justify-content: center; white-space: nowrap; }
  .icon, svg { flex: none; display: block; }
  .arrow { color: #5b7fb5; display: inline-block; vertical-align: middle; }

  .title { flex: none; height: 26px; display: flex; align-items: center; position: relative; border-bottom: 1px solid #33475e; background: radial-gradient(ellipse 110px 22px at 685px 14px, #c5cdd6cc 40%, #8d9aa800 100%), linear-gradient(90deg, #a9cdf2 0, #9cc2ea 200px, #7aa3cd 235px, #40566f 255px, #34485e 275px, #82a6c7 300px, #2c3a49 322px, #243240 385px, #5688ad 408px, #243343 428px, #1f2c38 580px, #58677a 620px, #5c6b80 750px, #3b5774 775px, #4d7ba8 850px, #6fa9d8 900px, #4a7ba9 960px, #7cb5e2 1010px, #5b89b2 1070px, #4a6f93 1120px, #79b2df 1150px, #6d9cc6 1230px, #8fbfe6 100%); }
  .title::after { content: ''; position: absolute; inset: 0 0 auto; height: 4px; background: linear-gradient(#ffffff55, #fff0); }
  .quick { width: 208px; height: 23px; margin-left: 0; padding-left: 51px; display: flex; align-items: center; gap: 6px; border: 1px solid #49607f; border-left: 0; border-radius: 0 12px 12px 0; background: linear-gradient(#c6ddf6cc, #a4c4e8cc); }
  .quick .split { gap: 5px; }
  .quick .icon { width: 16px; height: 16px; }
  .customize { width: 20px; height: 20px; }
  h1 { position: absolute; inset: 6px 0 auto; margin: 0; text-align: center; font-size: 12px; line-height: 16px; font-weight: normal; color: #111; }
  .winbtns { align-self: flex-start; display: flex; margin-left: auto; margin-right: 3px; border: 1px solid #3d4f66; border-top: 0; border-radius: 0 0 5px 5px; overflow: hidden; z-index: 1; }
  .winbtns button { height: 17px; width: 28px; background: linear-gradient(#dbe7f3 45%, #97b2cc 50%, #bdd3e8); border-right: 1px solid #4d617a; }
  .winbtns .close { width: 47px; border: 0; background: linear-gradient(#e3a698 45%, #bf3c22 50%, #dc7a52); }
  .office { position: absolute; left: 4px; top: 3px; width: 38px; height: 38px; border-radius: 50%; z-index: 3; border: 1px solid #7f92ae; background: radial-gradient(circle at 50% 30%, #fff, #dce5f1 55%, #9eb3d1); box-shadow: 0 1px 2px #3f5a85; }

  .tabs { flex: none; height: 24px; display: flex; align-items: flex-end; padding-left: 48px; background: #bfdbff; }
  .tabs > button { height: 22px; padding-top: 2px; }
  .tabs > .active { background: linear-gradient(#fff, #e3edfa); border: 1px solid #8db2e3; border-bottom: 0; border-radius: 3px 3px 0 0; height: 23px; }
  .docbtns { margin-left: auto; align-self: center; display: flex; align-items: center; gap: 12px; padding-right: 5px; }

  .ribbon { flex: none; height: 92px; display: flex; gap: 3px; align-items: stretch; padding: 2px 3px 4px; background: linear-gradient(#dde9f8, #c9dbf1 18%, #cfe0f4 60%, #e3f4ff); border-top: 1px solid #8db2e3; border-bottom: 1px solid #9fbbe0; }
  .group { flex: none; display: flex; flex-direction: column; border: 1px solid #9fbfdf; border-radius: 3px; box-shadow: inset 1px 1px #edf5fd; background: linear-gradient(#dfe9f6, #d4e0f1 16%, #c7d8ed 17%, #dae8f8); overflow: hidden; }
  .body { flex: 1; min-height: 0; display: flex; padding: 1px 3px 0; }
  .rows { display: flex; flex-direction: column; padding-top: 8px; gap: 7px; }
  .row { display: flex; height: 22px; }
  .caption { flex: none; position: relative; height: 16px; line-height: 15px; text-align: center; background: #c1d8f0; color: #3e6aaa; padding-right: 8px; }
  .caption button { position: absolute; right: 4px; top: 3px; }
  .big { flex-direction: column; justify-content: flex-start; line-height: 13px; padding-top: 2px; }
  .big > span { min-height: 13px; }
  .big .icon { margin-bottom: 5px; }
  .stack { display: flex; flex-direction: column; padding-left: 0; }
  .small { height: 22px; gap: 3px; justify-content: flex-start; }
  .sigma { width: 14px; color: #000; font: bold 15px "Liberation Serif", serif; text-align: center; }
  .combo { position: relative; display: block; height: 22px; }
  .combo select { appearance: none; width: 100%; height: 22px; padding: 0 2px; border: 1px solid #b5cbe6; border-radius: 0; background: #eaf2fb; color: #000; }
  .combo .arrow { position: absolute; right: 5px; top: 9px; pointer-events: none; }
  .wide { width: 98px; }
  .num { width: 42px; }
  .num select { border-left: 0; }
  .full { width: 127px; }
  .set { display: flex; border: 1px solid #9ab5d7; border-radius: 3px; background: linear-gradient(#dce8f6, #cbdcf0 45%, #bdd1ea 50%, #d3e3f5); height: 22px; overflow: hidden; }
  .set button { width: 22px; height: 20px; border-right: 1px solid #b9cee8; color: #000; }
  .set button:last-child { border-right: 0; }
  .set .split-lg { width: 33px; gap: 4px; }
  .set .wider { width: 23px; }
  .shift { margin-left: 3px; }
  .set .on { background: linear-gradient(#fbd59a, #f9b44c 45%, #ffd977); }
  .lines path { fill: none; stroke: #000; }
  .lines .blue { stroke: #2c66c4; stroke-width: 2; }
  .lines .dots { stroke-dasharray: 1 1; }
  .serif { font: bold 14px "Liberation Serif", serif; }
  .set .grow { font-size: 17px; color: #333; }
  .set .shrink { font-size: 13px; color: #333; }
  sup { font-size: 8px; line-height: 8px; color: #2c5aa8; align-self: flex-start; }
  .fontcolor { width: 16px; border-bottom: 4px solid red; font-size: 16px; line-height: 13px; color: #2d5190; }
  .align { width: 121px; margin: 0 0 6px; border-right: 1px solid #a6c0df; }
  .wraps { padding-left: 7px; }
  .set .pct { font-size: 12px; }
  .set .turn { width: 30px; gap: 1px; }
  .set .comma { font-size: 14px; font-weight: bold; }
  .set .dec { flex-direction: column; font-size: 9px; line-height: 8px; align-items: flex-end; padding-right: 2px; border: 0; }
  .dec i { font-style: normal; color: #2c66c4; }
  .editing { width: 109px; padding-left: 4px; }

  .formula { flex: none; height: 23px; display: flex; border: 1px solid #6a8fbe; border-width: 1px 0; background: #fff; color: #000; font-size: 12px; }
  .namebox { width: 155px; display: flex; align-items: center; padding-right: 2px; }
  .namebox input { flex: 1; min-width: 0; border: 0; padding: 0 6px 0 0; background: none; text-align: center; outline: 0; }
  .fxpart { width: 84px; margin-left: 4px; display: flex; align-items: center; justify-content: space-between; padding: 0 6px; border: 1px solid #8aa9d2; border-width: 0 1px; border-radius: 11px 0 0 11px; background: linear-gradient(#e6effb, #b6cce9); }
  .knob { width: 8px; height: 8px; border-radius: 50%; background: radial-gradient(circle at 60% 60%, #fff, #99a9c2); }
  .fx { font: italic 16px "Liberation Serif", serif; color: #444; }
  .fx sub { font-size: 10px; line-height: 8px; align-self: flex-end; }
  .fxinput { flex: 1; min-width: 0; border: 0; outline: 0; background: #fff; }
  .expand { width: 16px; border: 1px solid #7f9fca; background: linear-gradient(#f1f6fd, #cfdff3); }

  .work { flex: 1; min-height: 0; display: flex; border-top: 2px solid #d5e4f5; }
  .grid { flex: 1; min-width: 0; overflow: hidden; border-top: 1px solid #6a8fbe; background: #fff; }
  table { width: 100%; table-layout: fixed; border-collapse: separate; border-spacing: 0; font-size: 12px; line-height: 14px; color: #000; }
  th, td { padding: 0; height: 15px; border: 0 solid #000; border-width: 0 1px 1px 0; font-weight: normal; white-space: nowrap; overflow: hidden; line-height: 14px; }
  thead th { background: linear-gradient(#f6f9fc, #d5dfeb); border-color: #9eb6ce; color: #27405e; }
  tbody th { background: #e4ecf7; border-color: #9eb6ce; color: #27405e; }
  th.corner { background: #a9c4e9; }
  .corner svg { margin: 4px 3px 0 auto; }
  th.sel { background: linear-gradient(#f9d99f, #f1c15f); }
  td.data { padding: 0 0 0 6px; }
  td.first { padding-left: 2px; }
  td.right { text-align: right; padding: 0 2px; }
  .head .data { background: #92cddc; }
  .red .data { background: #f00; color: #1c0000; }
  .green .data { background: #00b050; color: #01140a; }
  td.cursor { position: relative; overflow: visible; outline: 1px solid #000; outline-offset: -2px; }
  td.cursor::after { content: ''; position: absolute; right: -3px; bottom: -3px; width: 5px; height: 5px; border: 1px solid #fff; background: #000; }

  .vscroll { width: 15px; flex: none; display: flex; flex-direction: column; align-items: center; background: #7a9cca; border-left: 1px solid #6484b5; }
  .splitter { width: 14px; height: 8px; border: 1px solid #53709f; background: #fff; }
  .vscroll button { height: 17px; width: 14px; background: #86a5d1; }
  .vtrack { flex: 1; width: 14px; display: flex; flex-direction: column; }
  .vthumb { height: 94%; border: 1px solid #6480ad; border-radius: 2px; background: linear-gradient(#66789a, #66789a) center/7px 1px no-repeat, linear-gradient(#66789a, #66789a) center calc(50% + 3px)/7px 1px no-repeat, linear-gradient(#66789a, #66789a) center calc(50% - 3px)/7px 1px no-repeat, linear-gradient(90deg, #fff, #d9e2ee 50%, #bfcddf 60%, #e5edf7); }

  .sheetbar { flex: none; height: 17px; display: flex; border-bottom: 1px solid #5f83b5; border-top: 1px solid #8daad3; background: linear-gradient(#8ca9d4, #a9c1e4); font-size: 12px; }
  .nav { width: 62px; padding-right: 2px; display: flex; justify-content: space-around; background: #c7dcf8; fill: #1f3f7f; }
  .sheet { position: relative; height: 15px; flex: none; color: #1d4486; }
  .shape { position: absolute; left: 0; top: 0; overflow: visible; }
  .sheet span { position: relative; padding-left: 3px; }
  .sheet .add { padding-left: 10px; }
  .current { font-weight: bold; }
  .hscroll { width: 539px; margin-left: auto; margin-right: 14px; display: flex; align-items: center; background: #7a9cca; }
  .vsplit { width: 6px; height: 13px; border: 1px solid #52719f; background: #fff; flex: none; }
  .hscroll button { width: 18px; height: 15px; }
  .htrack { flex: 1; height: 15px; }
  .hthumb { width: 84%; height: 15px; border: 1px solid #6480ad; border-radius: 2px; background: repeating-linear-gradient(90deg, #66789a 0 1px, #fff0 1px 2px) center/7px 7px no-repeat, linear-gradient(#fff, #d9e2ee 50%, #bfcddf 60%, #e0e8f3); }

  .status { flex: none; height: 22px; display: flex; align-items: center; background: linear-gradient(#e2eeff, #d3e4fb 30%, #b5d2f6 35%, #dcebff); border-top: 1px solid #fff; border-bottom: 1px solid #2c3c50; padding-right: 5px; }
  .ready { width: 42px; padding-left: 7px; height: 20px; line-height: 20px; border-right: 1px solid #a3c1e6; }
  .views { margin-left: auto; display: flex; border: 1px solid #9db9de; }
  .views button { width: 18px; height: 17px; background: #d3e0f2; }
  .views .on { background: linear-gradient(#fbdba4, #f7b551); }
  .zoom { width: 40px; }
  .slider { appearance: none; width: 101px; height: 18px; background: linear-gradient(#8097bd, #8097bd) center/100% 1px no-repeat, linear-gradient(#6b84ae, #6b84ae) center/1px 7px no-repeat; }
  .slider::-webkit-slider-thumb { appearance: none; width: 9px; height: 13px; border: 1px solid #4e6b9b; border-radius: 1px 1px 5px 5px; background: linear-gradient(#fff, #cbdcf4); }

  .taskbar { flex: none; height: 40px; display: flex; align-items: center; border-top: 1px solid #a9bccd; background: linear-gradient(#ffffff2e, #fff0 45%), linear-gradient(90deg, #5f7b94 0, #6c8297 60px, #8598aa 130px, #7b8fa2 300px, #6b7f92 410px, #232d36 440px, #1b242c 470px, #2b343c 530px, #1d262e 630px, #2d363e 700px, #1a232c 740px, #28323a 800px, #18222b 890px, #1f2a34 925px, #6c8196 945px, #7189a0 1100px, #8296a9 1230px, #6e859b 100%); color: #fff; }
  .start { width: 54px; }
  .pinned { width: 67px; }
  .task { position: relative; width: 59px; height: 39px; margin-right: 3px; border: 1px solid #2e3d4c; border-radius: 3px; background: linear-gradient(135deg, #ffffff66, #ffffff22 50%, #ffffff11); box-shadow: inset 0 0 0 1px #ffffff66; }
  .task.many { width: 55px; margin-right: 8px; }
  .many::after { content: ''; position: absolute; left: 100%; top: -1px; width: 5px; height: 39px; border: 1px solid #2e3d4c; border-left: 0; border-radius: 0 3px 3px 0; background: #ffffff33; }
  .live { background: linear-gradient(135deg, #ffffffcc, #ffffff77 55%, #ffffff99); }
  .tray { margin-left: auto; height: 39px; display: flex; align-items: center; font-size: 12px; }
  .desk { width: 49px; }
  .more { width: 13px; height: 34px; align-items: flex-start; font-size: 14px; }
  .lang { width: 35px; padding: 0 0 4px 8px; }
  .ti { width: 24px; }
  .clock { width: 72px; display: flex; flex-direction: column; align-items: center; line-height: 17px; }
  .peek { width: 14px; height: 39px; border: 1px solid #c5d2de; background: linear-gradient(135deg, #a9bccd, #647b92); }
</style>
